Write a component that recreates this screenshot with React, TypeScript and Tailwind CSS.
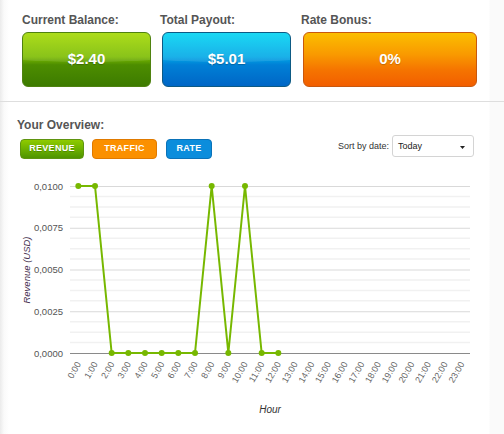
import React from "react";

const data: (number | null)[] = [0.01, 0.01, 0, 0, 0, 0, 0, 0, 0.01, 0, 0.01, 0, 0];

function Chart() {
  const left = 70;
  const right = 470;
  const top = 186;
  const bottom = 353;
  const step = (right - left) / 24;
  const xAt = (i: number) => left + step * (i + 0.5);
  const yAt = (v: number) => bottom - (v / 0.01) * (bottom - top);
  const majors = [0, 1, 2, 3, 4].map((k) => top + ((bottom - top) / 4) * k);
  const minors: number[] = [];
  for (let k = 0; k < 4; k++) {
    for (let m = 1; m < 4; m++) {
      minors.push(majors[k] + ((bottom - top) / 16) * m);
    }
  }
  const yLabels = ["0,0100", "0,0075", "0,0050", "0,0025", "0,0000"];
  const pts = data
    .map((v, i) => (v === null ? null : [xAt(i), yAt(v)]))
    .filter(Boolean) as number[][];
  return (
    <svg width={504} height={275} viewBox="0 159 504 275" className="block">
      {minors.map((y, i) => (
        <line key={"mi" + i} x1={left} x2={right} y1={y} y2={y} stroke="#f1f1f1" strokeWidth={1.5} />
      ))}
      {majors.slice(0, 4).map((y, i) => (
        <line key={"ma" + i} x1={left} x2={right} y1={y + 0.5} y2={y + 0.5} stroke="#d9d9d9" strokeWidth={1} />
      ))}
      <line x1={left} x2={right} y1={bottom + 0.5} y2={bottom + 0.5} stroke="#8a8a8a" strokeWidth={1} />
      {yLabels.map((t, i) => (
        <text key={t} x={63} y={majors[i] + 3.5} textAnchor="end" fontSize={9.5} fill="#555">
          {t}
        </text>
      ))}
      <text
        x={30}
        y={270}
        transform="rotate(-90 30 270)"
        textAnchor="middle"
        fontSize={9.5}
        fontStyle="italic"
        fill="#45304f"
      >
        Revenue (USD)
      </text>
      {Array.from({ length: 24 }).map((_, i) => {
        const x = xAt(i) + 3;
        const y = 364;
        return (
          <text
            key={i}
            x={x}
            y={y}
            transform={`rotate(-60 ${x} ${y})`}
            textAnchor="end"
            fontSize={9}
            fill="#666"
          >
            {i}:00
          </text>
        );
      })}
      <text x={270} y={413} textAnchor="middle" fontSize={10} fontStyle="italic" fill="#333">
        Hour
      </text>
      <polyline
        points={pts.map((p) => p.join(",")).join(" ")}
        fill="none"
        stroke="#77b800"
        strokeWidth={2}
        strokeLinejoin="round"
      />
      {pts.map((p, i) => (
        <circle key={i} cx={p[0]} cy={p[1]} r={3} fill="#77b800" />
      ))}
    </svg>
  );
}

export default function App() {
  return (
    <div className="w-[504px] h-[434px] overflow-hidden flex flex-col bg-[linear-gradient(to_right,#ebebeb_0px,#fafafa_4px,#ffffff_9px,#ffffff_489px,#fafafa_490px)] [font-family:'Liberation_Sans',Arial,sans-serif]">
      <div className="flex pt-[12px] pl-[22px]">
        <div className="flex flex-col w-[129px]">
          <div className="text-[12px] leading-[16px] font-bold text-[#555]">Current Balance:</div>
          <div className="mt-[4px] h-[55px] rounded-[6px] border border-[#4f8210] flex items-center justify-center bg-[image:radial-gradient(ellipse_150%_55%_at_50%_0%,rgba(255,255,255,0.10)_98%,rgba(255,255,255,0)_100%),linear-gradient(to_bottom,#a3d900,#7cbc00_45%,#4d8d00_60%,#3d7b00)]">
            <span className="text-white font-bold text-[15px] [text-shadow:0_1px_1px_rgba(0,0,0,0.25)]">$2.40</span>
          </div>
        </div>
        <div className="flex flex-col w-[129px] ml-[11px]">
          <div className="text-[12px] leading-[16px] font-bold text-[#555] -ml-[2px]">Total Payout:</div>
          <div className="mt-[4px] h-[55px] rounded-[6px] border border-[#0d5a84] flex items-center justify-center bg-[image:radial-gradient(ellipse_150%_55%_at_50%_0%,rgba(255,255,255,0.10)_98%,rgba(255,255,255,0)_100%),linear-gradient(to_bottom,#00d4f2,#00a8e6_45%,#0080d6_60%,#0066c6)]">
            <span className="text-white font-bold text-[15px] [text-shadow:0_1px_1px_rgba(0,0,0,0.25)]">$5.01</span>
          </div>
        </div>
        <div className="flex flex-col w-[174px] ml-[12px]">
          <div className="text-[12px] leading-[16px] font-bold text-[#555] -ml-[2px]">Rate Bonus:</div>
          <div className="mt-[4px] h-[55px] rounded-[6px] border border-[#c8580e] flex items-center justify-center bg-[linear-gradient(to_bottom,#fbbe00,#f99a00_40%,#f57400_70%,#f25e00)]">
            <span className="text-white font-bold text-[15px] [text-shadow:0_1px_1px_rgba(0,0,0,0.2)]">0%</span>
          </div>
        </div>
      </div>
      <div className="mt-[14px] border-t border-[#dedede]" />
      <div className="pt-[15px] pl-[17px] text-[12px] leading-[16px] font-bold text-[#555]">Your Overview:</div>
      <div className="flex items-start justify-between mt-[2px] pl-[20px] pr-[30px]">
        <div className="flex mt-[4px]">
          <div className="w-[64px] h-[20px] rounded-[4px] border border-[#5e9410] flex items-center justify-center bg-[linear-gradient(to_bottom,#8fcb00,#6aae00_55%,#4f9400)] text-white text-[9px] font-bold tracking-[0.3px] [text-shadow:0_1px_0_rgba(0,0,0,0.2)]">
            REVENUE
          </div>
          <div className="w-[65px] h-[20px] ml-[8px] rounded-[4px] border border-[#e07a00] flex items-center justify-center bg-[#fb9000] text-white text-[9px] font-bold tracking-[0.3px]">
            TRAFFIC
          </div>
          <div className="w-[46px] h-[20px] ml-[9px] rounded-[4px] border border-[#0a72b8] flex items-center justify-center bg-[#0b8ddc] text-white text-[9px] font-bold tracking-[0.3px]">
            RATE
          </div>
        </div>
        <div className="flex items-center">
          <span className="text-[9px] text-[#333] mr-[3px] mt-[1px]">Sort by date:</span>
          <div className="w-[82px] h-[22px] rounded-[3px] border border-[#d4d4d4] bg-white flex items-center justify-between pl-[5px] pr-[8px]">
            <span className="text-[9px] text-[#222] mt-[2px]">Today</span>
            <svg width="5" height="3" viewBox="0 0 5 3" className="mt-[2px]">
              <path d="M0 0 L5 0 L2.5 3 Z" fill="#222" />
            </svg>
          </div>
        </div>
      </div>
      <Chart />
    </div>
  );
}
